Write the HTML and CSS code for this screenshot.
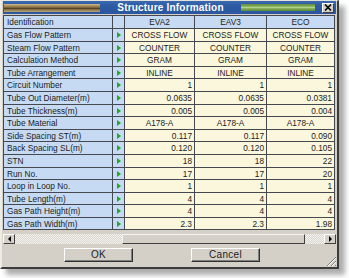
FILE: index.html
```html
<!DOCTYPE html>
<html>
<head>
<meta charset="utf-8">
<title>Structure Information</title>
<link rel="stylesheet" href="styles.css">
</head>
<body>
<div class="window">
  <div class="titlebar">
    <div class="grip-left"></div>
    <div class="title">Structure Information</div>
    <div class="grip-right"></div>
    <div class="close"><svg width="8" height="7" viewBox="0 0 8 7"><path d="M1 0.5 L7 6.5 M7 0.5 L1 6.5" stroke="#000" stroke-width="1.6"/></svg></div>
  </div>

  <div class="grid">
    <div class="c lbl">Identification</div><div class="c arw"></div><div class="c hd">EVA2</div><div class="c hd">EAV3</div><div class="c hd">ECO</div>

    <div class="c lbl">Gas Flow Pattern</div><div class="c arw"><i></i></div><div class="c tx">CROSS FLOW</div><div class="c tx">CROSS FLOW</div><div class="c tx">CROSS FLOW</div>
    <div class="c lbl">Steam Flow Pattern</div><div class="c arw"><i></i></div><div class="c tx">COUNTER</div><div class="c tx">COUNTER</div><div class="c tx">COUNTER</div>
    <div class="c lbl">Calculation Method</div><div class="c arw"><i></i></div><div class="c tx">GRAM</div><div class="c tx">GRAM</div><div class="c tx">GRAM</div>
    <div class="c lbl">Tube Arrangement</div><div class="c arw"><i></i></div><div class="c tx">INLINE</div><div class="c tx">INLINE</div><div class="c tx">INLINE</div>
    <div class="c lbl">Circuit Number</div><div class="c arw"><i></i></div><div class="c num">1</div><div class="c num">1</div><div class="c num">1</div>
    <div class="c lbl">Tube Out Diameter(m)</div><div class="c arw"><i></i></div><div class="c num">0.0635</div><div class="c num">0.0635</div><div class="c num">0.0381</div>
    <div class="c lbl">Tube Thickness(m)</div><div class="c arw"><i></i></div><div class="c num">0.005</div><div class="c num">0.005</div><div class="c num">0.004</div>
    <div class="c lbl">Tube Material</div><div class="c arw"><i></i></div><div class="c tx">A178-A</div><div class="c tx">A178-A</div><div class="c tx">A178-A</div>
    <div class="c lbl">Side Spacing ST(m)</div><div class="c arw"><i></i></div><div class="c num">0.117</div><div class="c num">0.117</div><div class="c num">0.090</div>
    <div class="c lbl">Back Spacing SL(m)</div><div class="c arw"><i></i></div><div class="c num">0.120</div><div class="c num">0.120</div><div class="c num">0.105</div>
    <div class="c lbl">STN</div><div class="c arw"><i></i></div><div class="c num">18</div><div class="c num">18</div><div class="c num">22</div>
    <div class="c lbl">Run No.</div><div class="c arw"><i></i></div><div class="c num">17</div><div class="c num">17</div><div class="c num">20</div>
    <div class="c lbl">Loop in Loop No.</div><div class="c arw"><i></i></div><div class="c num">1</div><div class="c num">1</div><div class="c num">1</div>
    <div class="c lbl">Tube Length(m)</div><div class="c arw"><i></i></div><div class="c num">4</div><div class="c num">4</div><div class="c num">4</div>
    <div class="c lbl">Gas Path Height(m)</div><div class="c arw"><i></i></div><div class="c num">4</div><div class="c num">4</div><div class="c num">4</div>
    <div class="c lbl">Gas Path Width(m)</div><div class="c arw"><i></i></div><div class="c num">2.3</div><div class="c num">2.3</div><div class="c num">1.98</div>
  </div>

  <div class="hscroll">
    <div class="sbtn"><span class="tri-l"></span></div>
    <div class="track t1"></div>
    <div class="thumb"></div>
    <div class="track t2"></div>
    <div class="sbtn"><span class="tri-r"></span></div>
  </div>

  <div class="buttons">
    <button class="btn">OK</button>
    <button class="btn">Cancel</button>
  </div>

  <svg class="sizegrip" width="11" height="11" viewBox="0 0 11 11">
    <path d="M10 1 L1 10 M10 5 L5 10 M10 9 L9 10" stroke="#808080" stroke-width="1"/>
    <path d="M10 2 L2 10 M10 6 L6 10" stroke="#ffffff" stroke-width="1"/>
  </svg>
</div>
</body>
</html>
```

FILE: styles.css
```css
* {
  box-sizing: border-box;
  margin: 0;
  padding: 0;
}

body {
  background: #ffffff;
  font-family: "Liberation Sans", Arial, sans-serif;
  width: 349px;
  height: 278px;
  overflow: hidden;
}

.window {
  position: relative;
  width: 339px;
  height: 269px;
  background: #d4d0c8;
  border-style: solid;
  border-width: 1px 2px 2px 2px;
  border-color: #e4e2dc #3c3c3c #3c3c3c #ecebe6;
  padding: 0 1px;
  box-shadow: 6px 6px 5px rgba(0, 0, 0, 0.32);
  display: flex;
  flex-direction: column;
}

/* ---------- title bar ---------- */
.titlebar {
  height: 13px;
  background: linear-gradient(#3a69b0, #2c5ba4 40%, #2a579e);
  display: flex;
  align-items: center;
  padding: 0 2px 0 1px;
}

.grip-left {
  width: 96px;
  height: 8px;
  background: linear-gradient(#cdbd92 0, #a48c5c 25%, #7a6438 45%, #4e3e22 55%, #8a7448 70%, #b8a475 100%);
}

.title {
  flex: 1;
  text-align: center;
  color: #ffffff;
  font-weight: bold;
  font-size: 10px;
  letter-spacing: 0.2px;
  line-height: 13px;
  white-space: nowrap;
}

.grip-right {
  width: 74px;
  height: 7px;
  background: linear-gradient(#5f8c3c 0, #86b05c 35%, #b2d48a 50%, #86b05c 65%, #5a8438 100%);
}

.close {
  margin-left: 7px;
  width: 12px;
  height: 10px;
  background: #d4d0c8;
  border: 1px solid;
  border-color: #ffffff #404040 #404040 #ffffff;
  display: flex;
  align-items: center;
  justify-content: center;
}

/* ---------- grid ---------- */
.grid {
  margin-top: 1px;
  width: 332px;
  background: #45494f;
  padding: 1px;
  display: grid;
  gap: 1px;
  grid-template-columns: 108px 11px 69px 71px 67px;
  grid-template-rows: 12px 12px 11px 12px 11px 12px 12px 11px 12px 11px 12px 12px 11px 12px 11px 12px 11px;
  font-size: 8.3px;
  color: #1c1c1c;
}

.c {
  display: flex;
  align-items: center;
  white-space: nowrap;
  overflow: hidden;
  background: #faf7dc;
}

.lbl {
  background: #c6dbf3;
  padding-left: 3px;
}

.arw {
  background: #c6dbf3;
  padding-left: 4px;
}

.arw i {
  display: block;
  width: 0;
  height: 0;
  border-left: 4px solid #1faa1f;
  border-top: 3.5px solid transparent;
  border-bottom: 3.5px solid transparent;
}

.hd {
  background: #c6dbf3;
  justify-content: center;
}

.tx {
  justify-content: center;
}

.num {
  justify-content: flex-end;
  padding-right: 2px;
}

/* ---------- horizontal scrollbar ---------- */
.hscroll {
  margin-top: 4px;
  height: 10px;
  display: flex;
}

.sbtn {
  width: 12px;
  height: 10px;
  background: #d4d0c8;
  border: 1px solid;
  border-color: #ffffff #404040 #404040 #ffffff;
  display: flex;
  align-items: center;
  justify-content: center;
}

.tri-l {
  width: 0;
  height: 0;
  border-right: 3px solid #000;
  border-top: 3px solid transparent;
  border-bottom: 3px solid transparent;
}

.tri-r {
  width: 0;
  height: 0;
  border-left: 3px solid #000;
  border-top: 3px solid transparent;
  border-bottom: 3px solid transparent;
}

.track {
  background: repeating-conic-gradient(#f4f3ef 0 25%, #d8d5ce 0 50%) 0 0 / 2px 2px;
}

.t1 {
  width: 107px;
}

.t2 {
  flex: 1;
}

.thumb {
  width: 183px;
  background: #d4d0c8;
  border: 1px solid;
  border-color: #f4f3ef #404040 #404040 #f4f3ef;
}

/* ---------- buttons ---------- */
.buttons {
  margin-top: 4px;
  display: flex;
  gap: 58px;
  padding-left: 61px;
}

.btn {
  width: 69px;
  height: 14px;
  background: #d4d0c8;
  border: 1px solid;
  border-color: #ffffff #303030 #303030 #ffffff;
  box-shadow: inset -1px -1px 0 #808080;
  font-family: "Liberation Sans", Arial, sans-serif;
  font-size: 10px;
  letter-spacing: 0.3px;
  color: #222222;
  line-height: 12px;
}

.sizegrip {
  position: absolute;
  right: 0;
  bottom: 0;
}
```
